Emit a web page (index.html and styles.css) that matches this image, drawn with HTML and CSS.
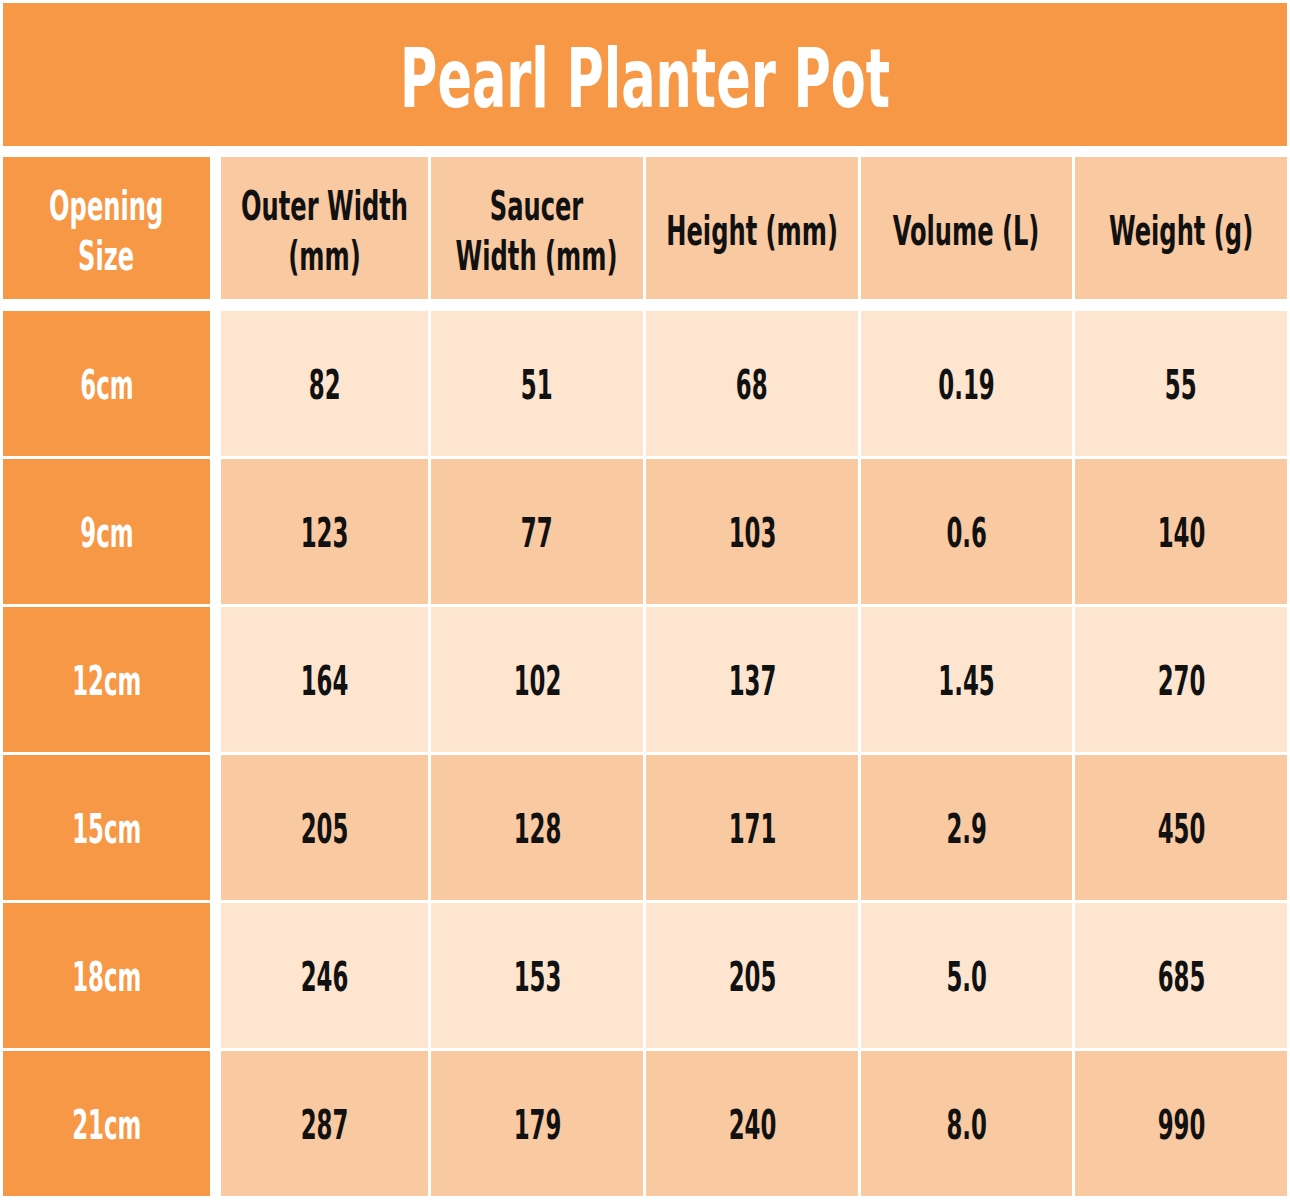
FILE: index.html
```html
<!DOCTYPE html>
<html lang="en">
<head>
<meta charset="utf-8">
<title>Pearl Planter Pot</title>
<link rel="stylesheet" href="styles.css">
</head>
<body>
<div class="sheet">
  <div class="title"><span class="squeeze wide">Pearl Planter Pot</span></div>
  <div class="row head">
    <div class="cell key"><span class="squeeze mid">Opening<br>Size</span></div>
    <div class="cell c2"><span class="squeeze mid">Outer Width<br>(mm)</span></div>
    <div class="cell c3"><span class="squeeze mid">Saucer<br>Width (mm)</span></div>
    <div class="cell c4"><span class="squeeze mid">Height (mm)</span></div>
    <div class="cell c5"><span class="squeeze mid">Volume (L)</span></div>
    <div class="cell c6"><span class="squeeze mid">Weight (g)</span></div>
  </div>
  <div class="body">
    <div class="row light">
      <div class="cell key"><span class="squeeze">6cm</span></div>
      <div class="cell c2"><span class="squeeze">82</span></div>
      <div class="cell c3"><span class="squeeze">51</span></div>
      <div class="cell c4"><span class="squeeze">68</span></div>
      <div class="cell c5"><span class="squeeze">0.19</span></div>
      <div class="cell c6"><span class="squeeze">55</span></div>
    </div>
    <div class="row dark">
      <div class="cell key"><span class="squeeze">9cm</span></div>
      <div class="cell c2"><span class="squeeze">123</span></div>
      <div class="cell c3"><span class="squeeze">77</span></div>
      <div class="cell c4"><span class="squeeze">103</span></div>
      <div class="cell c5"><span class="squeeze">0.6</span></div>
      <div class="cell c6"><span class="squeeze">140</span></div>
    </div>
    <div class="row light">
      <div class="cell key"><span class="squeeze">12cm</span></div>
      <div class="cell c2"><span class="squeeze">164</span></div>
      <div class="cell c3"><span class="squeeze">102</span></div>
      <div class="cell c4"><span class="squeeze">137</span></div>
      <div class="cell c5"><span class="squeeze">1.45</span></div>
      <div class="cell c6"><span class="squeeze">270</span></div>
    </div>
    <div class="row dark">
      <div class="cell key"><span class="squeeze">15cm</span></div>
      <div class="cell c2"><span class="squeeze">205</span></div>
      <div class="cell c3"><span class="squeeze">128</span></div>
      <div class="cell c4"><span class="squeeze">171</span></div>
      <div class="cell c5"><span class="squeeze">2.9</span></div>
      <div class="cell c6"><span class="squeeze">450</span></div>
    </div>
    <div class="row light">
      <div class="cell key"><span class="squeeze">18cm</span></div>
      <div class="cell c2"><span class="squeeze">246</span></div>
      <div class="cell c3"><span class="squeeze">153</span></div>
      <div class="cell c4"><span class="squeeze">205</span></div>
      <div class="cell c5"><span class="squeeze">5.0</span></div>
      <div class="cell c6"><span class="squeeze">685</span></div>
    </div>
    <div class="row dark">
      <div class="cell key"><span class="squeeze">21cm</span></div>
      <div class="cell c2"><span class="squeeze">287</span></div>
      <div class="cell c3"><span class="squeeze">179</span></div>
      <div class="cell c4"><span class="squeeze">240</span></div>
      <div class="cell c5"><span class="squeeze">8.0</span></div>
      <div class="cell c6"><span class="squeeze">990</span></div>
    </div>
  </div>
</div>
</body>
</html>
```
FILE: styles.css
```css
html, body {
  margin: 0;
  padding: 0;
  background: #ffffff;
}

body {
  font-family: "DejaVu Sans Condensed", "DejaVu Sans", "Liberation Sans", sans-serif;
  font-stretch: condensed;
  font-weight: bold;
  color: #111111;
}

.sheet {
  width: 1284px;
  padding: 3px 3px 4px 3px;
  display: flex;
  flex-direction: column;
}

.title {
  height: 143px;
  background: #f69846;
  color: #ffffff;
  display: flex;
  align-items: center;
  justify-content: center;
  font-size: 82px;
  padding-top: 7px;
  box-sizing: border-box;
  margin-bottom: 11px;
}

.squeeze {
  display: inline-block;
  white-space: nowrap;
  transform: scaleX(0.62);
  transform-origin: center center;
  text-align: center;
}

.squeeze.wide {
  transform: scaleX(0.69);
}

.squeeze.mid {
  transform: scaleX(0.655);
}

.row {
  display: flex;
  gap: 3px;
  height: 145px;
}

.head {
  height: 142px;
  margin-bottom: 12px;
  font-size: 41px;
  line-height: 50px;
}

.head .cell {
  padding-top: 5px;
  box-sizing: border-box;
}

.body {
  display: flex;
  flex-direction: column;
  gap: 3px;
  font-size: 41px;
}

.body .cell {
  padding-top: 2px;
  box-sizing: border-box;
}

.cell {
  display: flex;
  align-items: center;
  justify-content: center;
  text-align: center;
}

.key {
  width: 207px;
  margin-right: 8px;
  background: #f69846;
  color: #ffffff;
}

.c2 { width: 207px; }
.c3 { width: 212px; }
.c4 { width: 212px; }
.c5 { width: 211px; }
.c6 { width: 212px; }

.head .cell:not(.key) { background: #f9c9a1; }
.dark .cell:not(.key) { background: #f9c9a1; }
.light .cell:not(.key) { background: #fde5d0; }
```
